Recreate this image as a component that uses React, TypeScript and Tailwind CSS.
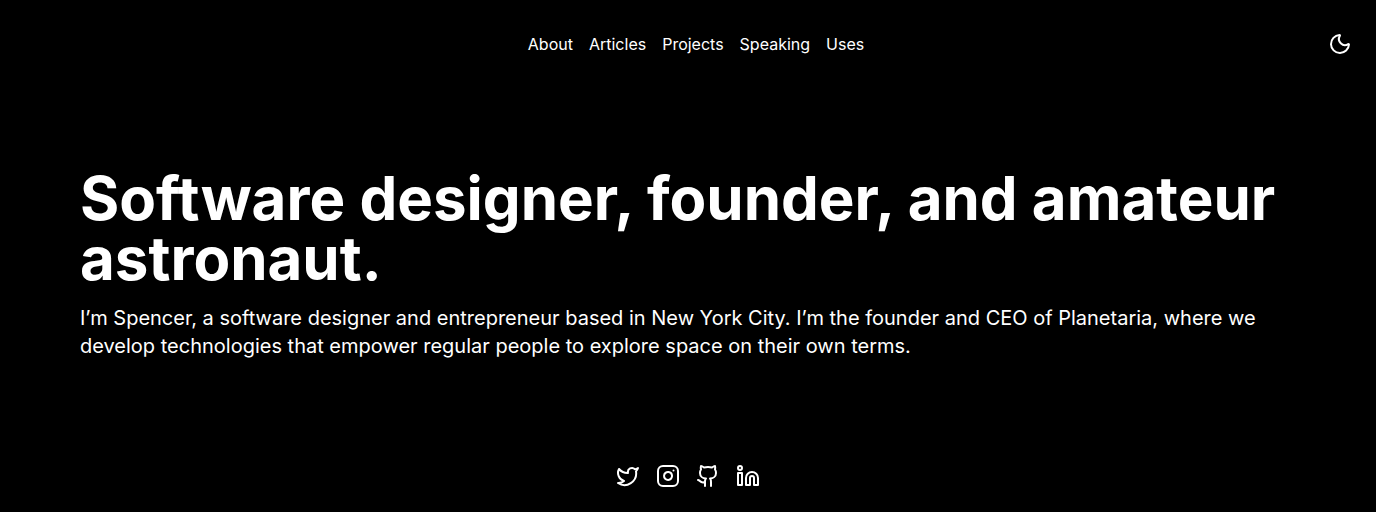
import React from "react";
import { Github, Instagram, Linkedin, Moon, Twitter } from "lucide-react";

const navLinks = ["About", "Articles", "Projects", "Speaking", "Uses"];

const socialLinks = [
  { name: "Twitter", Icon: Twitter },
  { name: "Instagram", Icon: Instagram },
  { name: "GitHub", Icon: Github },
  { name: "LinkedIn", Icon: Linkedin },
];

function Header() {
  return (
    <header className="grid grid-cols-[1fr_auto_1fr] items-center px-6 py-8">
      <nav aria-label="Main" className="col-start-2 pl-4">
        <ul className="flex gap-4">
          {navLinks.map((label) => (
            <li key={label}>
              <a href={`#${label.toLowerCase()}`}>{label}</a>
            </li>
          ))}
        </ul>
      </nav>
      <button type="button" aria-label="Toggle theme" className="justify-self-end">
        <Moon size={24} />
      </button>
    </header>
  );
}

export default function App() {
  return (
    <div className="min-h-screen bg-black font-['Inter',sans-serif] text-base text-white">
      <Header />
      <main className="px-20 pt-20">
        <h1 className="text-6xl font-bold">Software designer, founder, and amateur astronaut.</h1>
        <p className="mt-4 text-xl leading-7">
          I’m Spencer, a software designer and entrepreneur based in New York City. I’m the founder
          and CEO of Planetaria, where we develop technologies that empower regular people to explore
          space on their own terms.
        </p>
      </main>
      <ul className="mt-26 flex justify-center gap-4 pb-6">
        {socialLinks.map(({ name, Icon }) => (
          <li key={name}>
            <a href={`#${name.toLowerCase()}`} aria-label={name}>
              <Icon size={24} />
            </a>
          </li>
        ))}
      </ul>
    </div>
  );
}
